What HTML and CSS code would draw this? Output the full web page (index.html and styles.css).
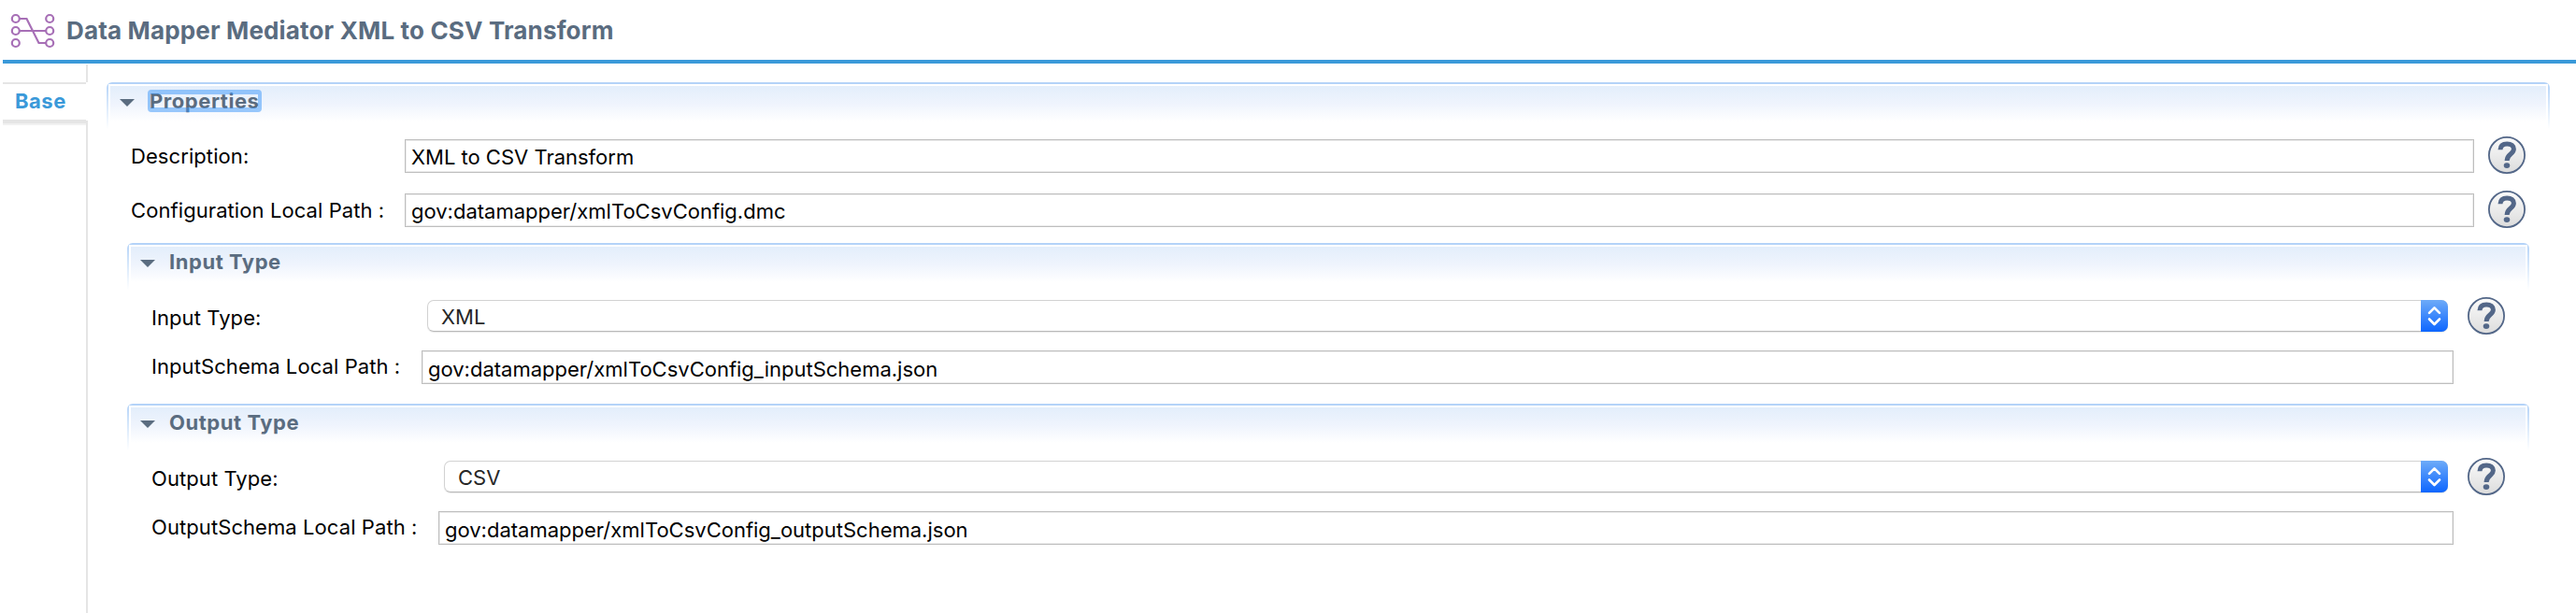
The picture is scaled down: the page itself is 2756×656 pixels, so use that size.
FILE: index.html
```html
<!DOCTYPE html>
<html lang="en">
<head>
<meta charset="utf-8">
<title>Data Mapper Mediator</title>
<link rel="stylesheet" href="styles.css">
</head>
<body>
<svg class="defs" width="0" height="0">
  <defs>
    <linearGradient id="helpFill" x1="0" y1="0" x2="0" y2="1"><stop offset="0" stop-color="#fbfbfb"/><stop offset="1" stop-color="#dcdcdc"/></linearGradient>
    <symbol id="help" viewBox="0 0 40 40">
      <circle cx="20" cy="20" r="19.1" fill="url(#helpFill)" stroke="#536788" stroke-width="1.8"/>
      <path d="M13 14.3C13.1 9.8 16 7.9 20.2 7.9C24.8 7.9 27.4 10.2 27.4 13.5C27.4 19 20.1 18.6 20.1 26" fill="none" stroke="#536788" stroke-width="5"/>
      <ellipse cx="20" cy="31.1" rx="3.3" ry="2.9" fill="#536788"/>
    </symbol>
    <symbol id="updown" viewBox="0 0 29 34">
      <path d="M9 13.8L14.5 8.3L20 13.8M9 20.5L14.5 26L20 20.5" fill="none" stroke="#fff" stroke-width="2.6" stroke-linecap="round" stroke-linejoin="round"/>
    </symbol>
  </defs>
</svg>
<header class="header">
  <svg class="logo" width="50" height="40" viewBox="10 13 50 40" fill="none" stroke="#a76fb6" stroke-width="2.2">
    <circle cx="16.8" cy="20" r="4"/><circle cx="53.2" cy="20" r="4"/>
    <circle cx="16.8" cy="33" r="4"/><circle cx="53.2" cy="33" r="4"/>
    <circle cx="16.8" cy="46" r="4"/><circle cx="53.2" cy="46" r="4"/>
    <path d="M21 33H49M21 20H28.5L41.5 46H49"/>
  </svg>
  <h1 class="title">Data Mapper Mediator XML to CSV Transform</h1>
</header>
<div class="body">
  <nav class="tabs"><div class="spacer"></div><div class="tab">Base</div><div class="rest"></div></nav>
  <main class="panel">
    <section class="section">
      <div class="head"><i class="arrow"></i><h2 class="name selected">Properties</h2></div>
      <div class="row"><label class="label">Description:</label><div class="field">XML to CSV Transform</div><svg class="help"><use href="#help"/></svg></div>
      <div class="row second"><label class="label">Configuration Local Path :</label><div class="field">gov:datamapper/xmlToCsvConfig.dmc</div><svg class="help"><use href="#help"/></svg></div>
      <section class="section nested input">
        <div class="head"><i class="arrow"></i><h2 class="name">Input Type</h2></div>
        <div class="row"><label class="label">Input Type:</label><div class="select">XML<svg class="stepper"><use href="#updown"/></svg></div><svg class="help"><use href="#help"/></svg></div>
        <div class="row path"><label class="label">InputSchema Local Path :</label><div class="field">gov:datamapper/xmlToCsvConfig_inputSchema.json</div></div>
      </section>
      <section class="section nested output">
        <div class="head"><i class="arrow"></i><h2 class="name">Output Type</h2></div>
        <div class="row"><label class="label">Output Type:</label><div class="select">CSV<svg class="stepper"><use href="#updown"/></svg></div><svg class="help"><use href="#help"/></svg></div>
        <div class="row path"><label class="label">OutputSchema Local Path :</label><div class="field">gov:datamapper/xmlToCsvConfig_outputSchema.json</div></div>
      </section>
    </section>
  </main>
</div>
</body>
</html>
```
FILE: styles.css
```css
* { box-sizing: border-box; }
body { margin: 0; height: 656px; overflow: hidden; display: flex; flex-direction: column; background: #fff; color: #000; font: 22px/28px Inter, "Liberation Sans", sans-serif; white-space: nowrap; }
h1, h2 { margin: 0; }
.defs { position: absolute; }
.header { height: 68px; margin-left: 3px; padding: 0 0 0 7px; display: flex; align-items: center; border-bottom: 4px solid #3a99d9; flex: none; }
.logo { flex: none; margin-top: 2px; }
.title { margin: 1px 0 0 11px; font-size: 26px; line-height: 34px; font-weight: 700; letter-spacing: 0.16px; color: #5a6c80; }
.body { flex: 1; display: flex; }
.tabs { width: 91px; margin-left: 3px; display: flex; flex-direction: column; }
.spacer { height: 19px; margin-top: 1px; border-right: 2px solid #e5e5e5; }
.tab { height: 44px; border-top: 2px solid #e5e5e5; border-bottom: 4px solid #e5e5e5; box-shadow: 0 2px #f1f1f1; margin-right: 2px; padding: 0 0 2px 13px; display: flex; align-items: center; color: #3a99d9; font-weight: 700; letter-spacing: 0.5px; }
.rest { flex: 1; margin-top: -3px; border-right: 2px solid #e5e5e5; }
.panel { flex: 1; padding: 20px 28px 0 20px; }
.head { height: 50px; padding: 6px 0 0 14px; display: flex; align-items: flex-start; border-radius: 6px 6px 0 0;
  background:
    linear-gradient(#b4d3f8, #b4d3f8) 0 0 / 100% 2px no-repeat,
    linear-gradient(#b4d3f8, #fff) 0 0 / 2px 100% no-repeat,
    linear-gradient(#b4d3f8, #fff) 100% 0 / 2px 100% no-repeat,
    linear-gradient(#e3eefb, #eff4fd 50%, #fff) 4px 4px / calc(100% - 8px) 38px no-repeat; }
.arrow { width: 16px; height: 8px; margin-top: 12px; background: #5a6c80; clip-path: polygon(0 0, 100% 0, 50% 100%); }
.name { margin-left: 15px; font-size: 22px; line-height: 28px; font-weight: 700; letter-spacing: 0.55px; color: #5a6c80; }
.selected { position: relative; margin: 2px 0 0 14px; width: 122px; height: 24px; padding-left: 2px; line-height: 24px; }
.selected::after { content: ""; position: absolute; inset: 0; border: solid rgba(58, 150, 250, 0.5); border-width: 5px 4px 5px 3px; border-radius: 4px; }
.row { height: 40px; margin: 8px 26px 0; display: flex; align-items: center; }
.row.second { margin-top: 18px; }
.label { width: 293px; flex: none; padding-top: 2px; letter-spacing: 0.08px; }
.field { flex: 1; height: 36px; padding: 4px 6px 0; border: 1px solid #bebebe; box-shadow: inset 0 0 0 1px #ececec; margin-top: 2px; }
.help { width: 40px; height: 40px; flex: none; margin-left: 15px; }
.nested { margin: 16px 22px 0; }
.nested .label { padding-top: 4px; }
.nested + .nested { margin-top: 21px; }
.nested .help { margin-left: 21px; }
.input .label { width: 295px; }
.output .label { width: 313px; }
.select { flex: 1; height: 34px; padding: 3px 0 0 14px; border: 1px solid #d2d2d2; border-bottom-color: #b8b8b8; border-radius: 7px; box-shadow: 0 1px 1px #e8e8e8; display: flex; justify-content: space-between; color: #272727; }
.stepper { width: 29px; height: 34px; margin: -4px -1px 0 0; background: linear-gradient(#6eabf8, #0d66ff); border-radius: 0 7px 7px 0; flex: none; }
.row.path { height: 36px; margin: 17px 81px 0 26px; }
.row.path .label { padding: 0 0 2px; }
.input .path .label { width: 289px; }
.output .path .label { width: 307px; }
.path .field { margin-top: 0; padding-top: 5px; }
```
